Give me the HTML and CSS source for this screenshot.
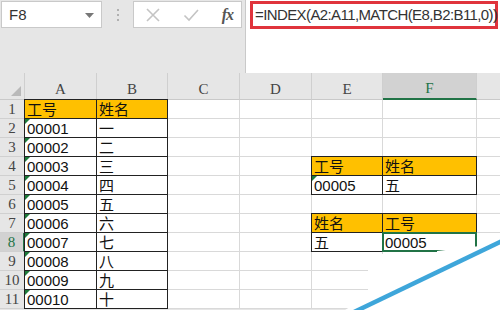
FILE: index.html
```html
<!DOCTYPE html>
<html>
<head>
<meta charset="utf-8">
<link rel="stylesheet" href="styles.css">
</head>
<body>
<div class="app">
  <div class="topbar">
    <div class="left-tools">
      <div class="namebox">
        <span class="name">F8</span>
        <svg class="dd" width="9" height="5" viewBox="0 0 9 5"><path d="M0 0 L9 0 L4.5 5 Z" fill="#777"/></svg>
      </div>
      <div class="dots"><i></i><i></i><i></i></div>
      <div class="fbtns">
        <svg width="16" height="16" viewBox="0 0 16 16"><path d="M2 2 L14 14 M14 2 L2 14" stroke="#c4c4c4" stroke-width="1.6" fill="none"/></svg>
        <svg width="16" height="16" viewBox="0 0 16 16"><path d="M1.5 8.5 L6 13 L15 3" stroke="#c4c4c4" stroke-width="1.6" fill="none"/></svg>
        <span class="fx">fx</span>
      </div>
    </div>
    <div class="formula">
      <div class="ftext">=INDEX(A2:A11,MATCH(E8,B2:B11,0))</div>
    </div>
  </div>
  <div class="sheet">
    <div class="ch corner"><span class="tri"></span></div>
    <div class="ch">A</div><div class="ch">B</div><div class="ch">C</div><div class="ch">D</div><div class="ch">E</div><div class="ch sel">F</div><div class="ch last"></div>

    <div class="rh">1</div><div class="c b bt bl o">工号</div><div class="c b bt o">姓名</div><div class="c"></div><div class="c"></div><div class="c"></div><div class="c"></div><div class="c last"></div>
    <div class="rh">2</div><div class="c b bl t">00001</div><div class="c b">一</div><div class="c"></div><div class="c"></div><div class="c"></div><div class="c"></div><div class="c last"></div>
    <div class="rh">3</div><div class="c b bl t">00002</div><div class="c b">二</div><div class="c"></div><div class="c"></div><div class="c"></div><div class="c"></div><div class="c last"></div>
    <div class="rh">4</div><div class="c b bl t">00003</div><div class="c b">三</div><div class="c"></div><div class="c"></div><div class="c b bt bl o">工号</div><div class="c b bt o">姓名</div><div class="c last"></div>
    <div class="rh">5</div><div class="c b bl t">00004</div><div class="c b">四</div><div class="c"></div><div class="c"></div><div class="c b bl t">00005</div><div class="c b">五</div><div class="c last"></div>
    <div class="rh">6</div><div class="c b bl t">00005</div><div class="c b">五</div><div class="c"></div><div class="c"></div><div class="c"></div><div class="c"></div><div class="c last"></div>
    <div class="rh">7</div><div class="c b bl t">00006</div><div class="c b">六</div><div class="c"></div><div class="c"></div><div class="c b bt bl o">姓名</div><div class="c b bt o">工号</div><div class="c last"></div>
    <div class="rh selr">8</div><div class="c b bl t">00007</div><div class="c b">七</div><div class="c"></div><div class="c"></div><div class="c b bl">五</div><div class="c b active">00005</div><div class="c last"></div>
    <div class="rh">9</div><div class="c b bl t">00008</div><div class="c b">八</div><div class="c"></div><div class="c"></div><div class="c"></div><div class="c"></div><div class="c last"></div>
    <div class="rh">10</div><div class="c b bl t">00009</div><div class="c b">九</div><div class="c"></div><div class="c"></div><div class="c"></div><div class="c"></div><div class="c last"></div>
    <div class="rh">11</div><div class="c b bl t">00010</div><div class="c b">十</div><div class="c"></div><div class="c"></div><div class="c"></div><div class="c"></div><div class="c last"></div>
  </div>
  <svg class="overlay" width="500" height="310" viewBox="0 0 500 310">
    <polygon points="437,251 480,246 500,238 500,310 345,310 368,296 368,254 437,254" fill="#ffffff"/>
    <line x1="352" y1="313" x2="502" y2="241" stroke="#3ea6da" stroke-width="4.5"/>
  </svg>
</div>
</body>
</html>
```
FILE: styles.css
```css
* { box-sizing: border-box; margin: 0; padding: 0; }
html, body { width: 500px; height: 310px; overflow: hidden; background: #e6e6e6; }
body { font-family: "Liberation Sans", "Noto Sans CJK SC", sans-serif; }
.app { position: relative; width: 500px; height: 310px; }

.topbar { display: flex; height: 73px; }
.left-tools { display: flex; align-items: flex-start; padding: 1px 0 0 1px; width: 245px; }
.namebox {
  width: 101px; height: 27px; background: #fff; border: 1px solid #c9c9c9;
  display: flex; align-items: center; justify-content: space-between; padding: 0 7px 0 7px;
}
.name { font-size: 15px; color: #333; }
.dd { margin-top: 1px; }
.dots { width: 31px; height: 27px; display: flex; flex-direction: column; align-items: center; justify-content: center; gap: 3px; }
.dots i { display: block; width: 2px; height: 2px; background: #b0b0b0; }
.fbtns {
  width: 109px; height: 27px; background: #fff; border: 1px solid #c9c9c9;
  display: flex; align-items: center; justify-content: space-between; padding: 0 8px 0 11px;
}
.fx { font-family: "Liberation Serif", serif; font-style: italic; font-weight: bold; font-size: 16px; color: #555; letter-spacing: -1px; }
.formula { flex: 1; min-width: 0; background: #fff; border-left: 1px solid #c9c9c9; padding: 1px 2px 0 4px; }
.ftext {
  height: 28px; border: 3px solid #e0343c; font-size: 15px; color: #333;
  padding-left: 2px; line-height: 22px; letter-spacing: -0.6px; white-space: nowrap;
}

.sheet {
  display: grid;
  grid-template-columns: 25px 72px 71px 72px 72px 71px 94px 23px;
  grid-template-rows: 27px repeat(11, 19px);
}
.ch {
  background: #e6e6e6; border-right: 1px solid #cfcfcf; border-bottom: 1px solid #c9c9c9;
  font-family: "Liberation Serif", serif; font-size: 15px; color: #444;
  display: flex; align-items: flex-end; justify-content: center; padding-bottom: 1px;
}
.ch.sel { background: #d2d2d2; border-bottom: 2px solid #217346; color: #217346; }
.ch.last { border-right: none; }
.corner { position: relative; }
.tri { position: absolute; right: 3px; bottom: 3px; width: 0; height: 0;
  border-left: 10px solid transparent; border-bottom: 10px solid #b9b9b9; }
.rh {
  background: #e6e6e6; border-right: 1px solid #c9c9c9; border-bottom: 1px solid #d0d0d0;
  font-family: "Liberation Serif", serif; font-size: 15px; color: #444;
  display: flex; align-items: flex-end; justify-content: center; line-height: 17px;
}
.rh.selr { background: #d2d2d2; border-right: 2px solid #217346; color: #217346; }
.c {
  background: #fff; border-right: 1px solid #d9d9d9; border-bottom: 1px solid #d9d9d9;
  font-size: 15px; color: #111; padding-left: 2px; line-height: 17px;
  display: flex; align-items: flex-end; white-space: nowrap; position: relative;
}
.c.last { border-right: none; }
.c.b { border-right-color: #222; border-bottom-color: #222; }
.c.bl { box-shadow: -1px 0 0 #222; }
.c.bt { box-shadow: 0 -1px 0 #222; }
.c.bt.bl { box-shadow: -1px 0 0 #222, 0 -1px 0 #222, -1px -1px 0 #222; }
.c.o { background: #ffc000; }
.c.t::before {
  content: ""; position: absolute; left: 0; top: 0; width: 0; height: 0;
  border-top: 5px solid #1e7a3a; border-right: 5px solid transparent;
}
.c.active::after {
  content: ""; position: absolute; left: -1px; top: -1px; right: -1px; bottom: -1px;
  border: 2px solid #217346;
}
.overlay { position: absolute; left: 0; top: 0; pointer-events: none; }
```
